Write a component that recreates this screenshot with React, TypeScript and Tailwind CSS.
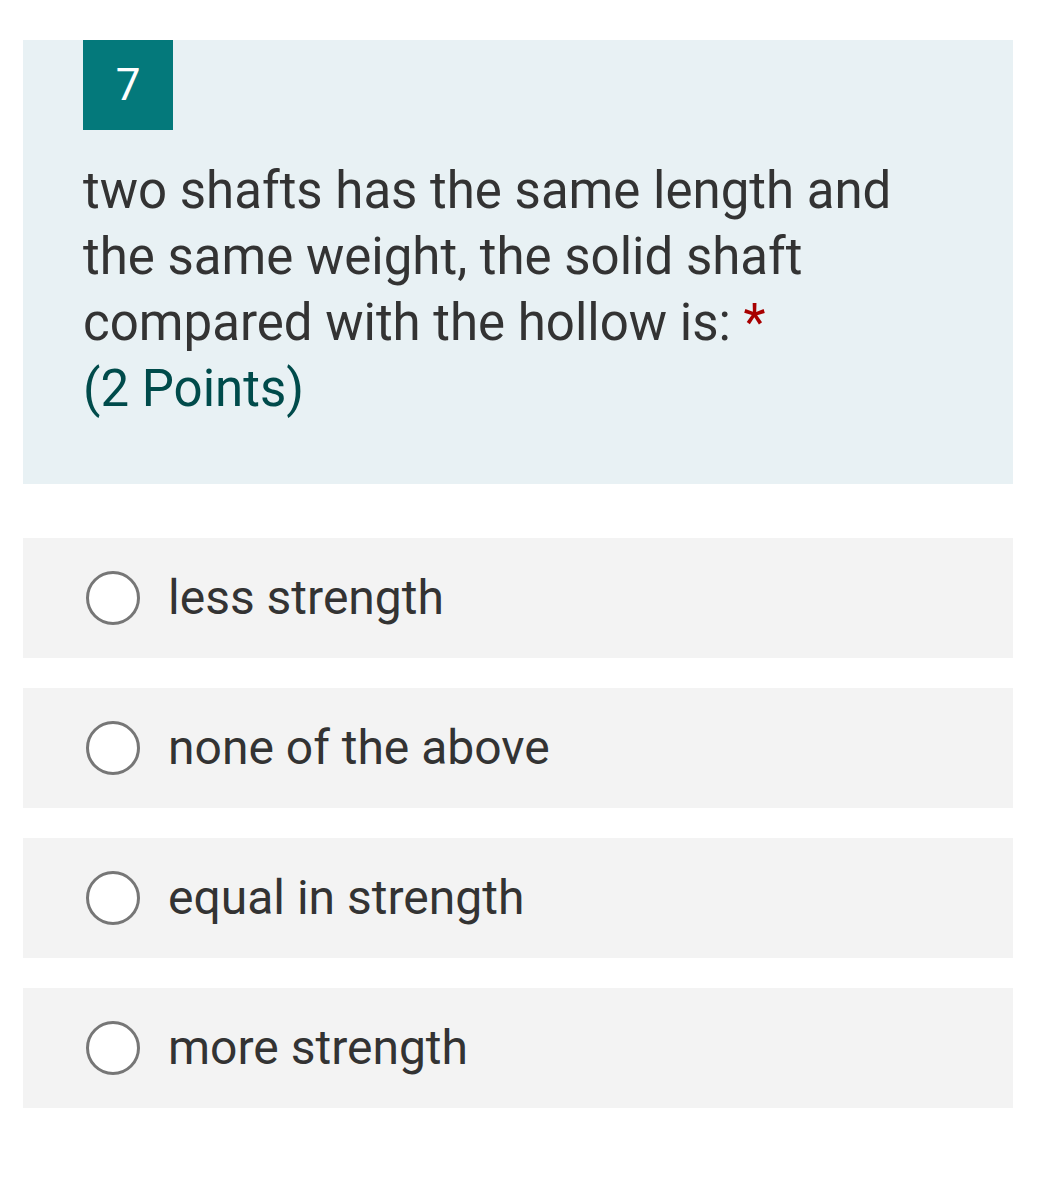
import React from "react";

const options = ["less strength", "none of the above", "equal in strength", "more strength"];

function Radio() {
  return (
    <span className="block h-[54px] w-[54px] shrink-0 rounded-full border-[3px] border-[#767676] bg-white" />
  );
}

export default function App() {
  return (
    <div
      className="min-h-[1204px] bg-white pl-[23px] pr-[26px] pt-[40px] text-[#333333]"
      style={{ fontFamily: "Roboto, 'Noto Sans', sans-serif" }}
    >
      <section className="bg-[#e8f1f4] pl-[60px] pr-[50px] pb-[62px]">
        <div className="flex h-[90px] w-[90px] items-center justify-center bg-[#04797b] text-[44px] text-white">
          7
        </div>
        <h2 className="mt-[28px] text-[51px] font-normal leading-[66px]">
          two shafts has the same length and the same weight, the solid shaft compared with the hollow is:{" "}
          <span className="text-[#a80000]">*</span>
          <br />
          <span className="text-[#004b4b]">(2 Points)</span>
        </h2>
      </section>

      <div className="mt-[54px] flex flex-col gap-[30px]">
        {options.map((o) => (
          <label key={o} className="flex h-[120px] items-center gap-[28px] bg-[#f3f3f3] pl-[63px]">
            <Radio />
            <span className="text-[48px] leading-none">{o}</span>
          </label>
        ))}
      </div>
    </div>
  );
}
